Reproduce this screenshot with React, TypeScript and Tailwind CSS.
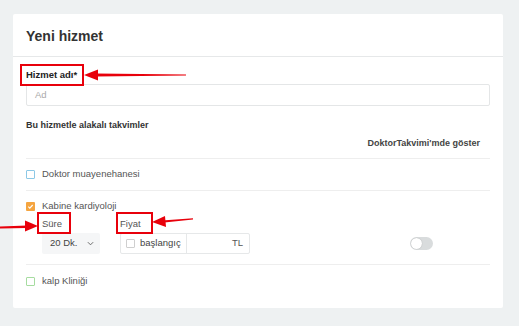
import React from 'react';

const font = { fontFamily: '"Liberation Sans", Arial, sans-serif' };

function Check({ tone }: { tone: 'blue' | 'orange' | 'green' | 'gray' }) {
  if (tone === 'orange') {
    return (
      <span className="flex h-[9px] w-[9px] items-center justify-center rounded-[1px] bg-[#f5a540]">
        <svg width="7" height="7" viewBox="0 0 8 8">
          <path d="M1.5 4.2 L3.2 5.8 L6.5 2.3" fill="none" stroke="#fff" strokeWidth="1.3" />
        </svg>
      </span>
    );
  }
  const border =
    tone === 'blue' ? 'border-[#8cc8e6]' : tone === 'green' ? 'border-[#a6dca0]' : 'border-[#cfcfcf]';
  return <span className={`block h-[9px] w-[9px] rounded-[1px] border bg-white ${border}`} />;
}

function Marked({ children, box }: { children: React.ReactNode; box: string }) {
  return (
    <div className="relative flex w-fit">
      {children}
      <span className={`pointer-events-none absolute border-2 border-[#e8000b] ${box}`} />
    </div>
  );
}

export default function App() {
  return (
    <div className="relative h-[326px] w-[519px] overflow-hidden bg-[#eef1f2] pl-[13px] pt-[14px]" style={font}>
      <div className="h-[294px] w-[490px] rounded-[2px] bg-white">
        <div className="flex h-[43px] items-center border-b border-[#e6e8e9] px-[13px] pt-[3px]">
          <h2 className="text-[14px] font-bold text-[#333]">Yeni hizmet</h2>
        </div>

        <div className="px-[13px] pt-[12px]">
          <Marked box="-left-[6px] -right-[7px] -top-[5px] -bottom-[5px]">
            <span className="block text-[9.5px] font-bold leading-[12px] text-[#222]">Hizmet adı*</span>
          </Marked>
          <div className="mt-[3px] flex h-[22px] items-center rounded-[2px] border border-[#e4e6e7] px-[8px] text-[9.5px] text-[#aaa]">
            Ad
          </div>

          <div className="mt-[13px] text-[9px] font-bold leading-[12px] text-[#333]">Bu hizmetle alakalı takvimler</div>
          <div className="mt-[6px] pr-[10px] text-right text-[9px] font-bold leading-[12px] text-[#444]">
            DoktorTakvimi'mde göster
          </div>

          <div className="mt-[9px] border-t border-[#eeeeee]">
            <div className="flex h-[31px] items-center gap-[7px] text-[9.5px] text-[#555]">
              <Check tone="blue" />
              <span>Doktor muayenehanesi</span>
            </div>
          </div>

          <div className="border-t border-[#eeeeee] pt-[9px] pb-[10px]">
            <div className="flex items-center gap-[7px] text-[9.5px] leading-[12px] text-[#555]">
              <Check tone="orange" />
              <span>Kabine kardiyoloji</span>
            </div>
            <div className="mt-[6px] flex items-end pl-[16px]">
              <div className="w-[58px]">
                <Marked box="-left-[5px] -right-[9px] -top-[6px] -bottom-[4px]">
                  <span className="block text-[9.5px] leading-[12px] text-[#555]">Süre</span>
                </Marked>
                <div className="mt-[3px] flex h-[21px] items-center justify-between rounded-[2px] bg-[#f5f6f7] pl-[8px] pr-[6px] text-[9.5px] text-[#444]">
                  <span>20 Dk.</span>
                  <svg width="7" height="5" viewBox="0 0 8 5">
                    <path d="M1 1 L4 4 L7 1" fill="none" stroke="#666" strokeWidth="1.1" />
                  </svg>
                </div>
              </div>
              <div className="ml-[20px] w-[130px]">
                <Marked box="-left-[4px] -right-[12px] -top-[6px] -bottom-[4px]">
                  <span className="block text-[9.5px] leading-[12px] text-[#555]">Fiyat</span>
                </Marked>
                <div className="mt-[3px] flex h-[21px] items-center rounded-[2px] border border-[#e6e8e9] text-[9.5px] text-[#444]">
                  <div className="flex h-full w-[66px] items-center gap-[5px] border-r border-[#e6e8e9] pl-[5px]">
                    <Check tone="gray" />
                    <span>başlangıç</span>
                  </div>
                  <span className="ml-auto pr-[6px] text-[#555]">TL</span>
                </div>
              </div>
              <div className="ml-auto mb-[4px] mr-[57px] flex h-[13px] w-[23px] items-center rounded-full bg-[#d9dcdd] px-[1px]">
                <span className="block h-[11px] w-[11px] rounded-full bg-white shadow-[0_0_1px_rgba(0,0,0,0.3)]" />
              </div>
            </div>
          </div>

          <div className="border-t border-[#eeeeee]">
            <div className="flex h-[32px] items-center gap-[7px] text-[9.5px] text-[#555]">
              <Check tone="green" />
              <span>kalp Kliniği</span>
            </div>
          </div>
        </div>
      </div>

      <svg className="pointer-events-none absolute left-0 top-0" width="519" height="326" viewBox="0 0 519 326">
        <g fill="#e8000b">
          <polygon points="96,73.6 186,74.4 186,75.6 96,76.4" />
          <polygon points="84,75 98,69.5 98,80.5" />
          <polygon points="0,226.6 27,225.4 27,228 0,228.4" />
          <polygon points="38,226 25,220.5 25,231.5" />
          <polygon points="162,220.4 193,218.2 193,219.6 162,222.8" />
          <polygon points="152,222 165,216 166,227" />
        </g>
      </svg>
    </div>
  );
}
